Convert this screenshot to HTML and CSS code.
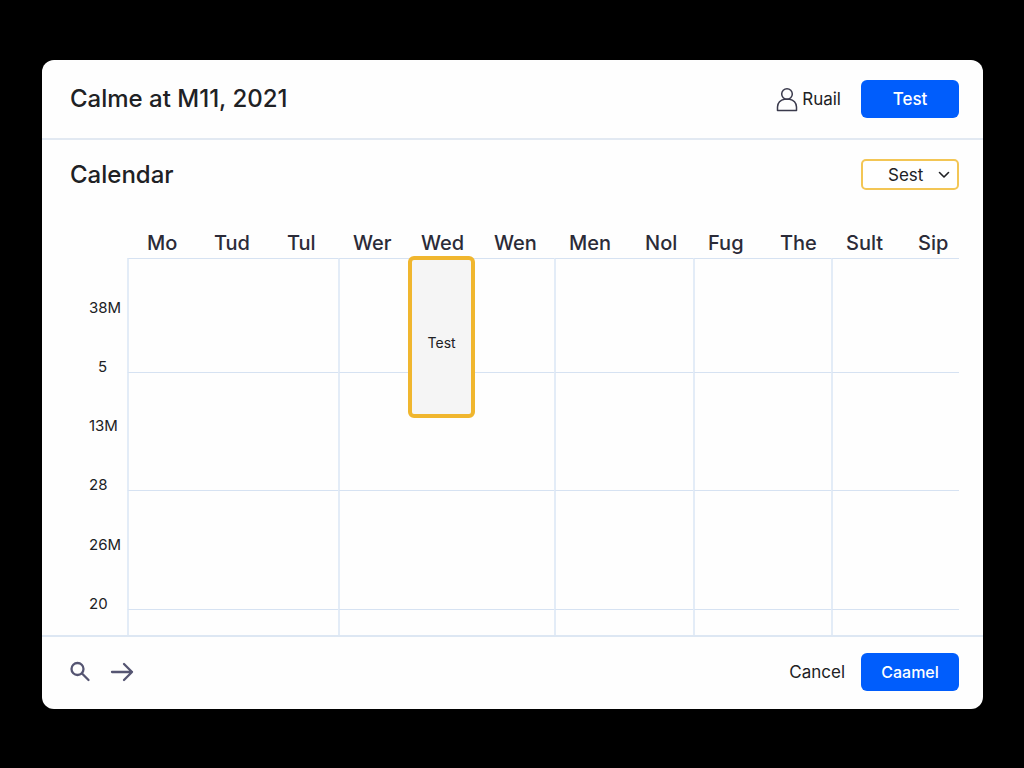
FILE: index.html
```html
<!DOCTYPE html>
<html lang="en">
<head>
<meta charset="utf-8">
<meta name="viewport" content="width=device-width, initial-scale=1">
<title>Calendar</title>
<link rel="stylesheet" href="styles.css">
</head>
<body>
<main class="card">
  <header class="bar header">
    <h1 class="title">Calme at M11, 2021</h1>
    <div class="actions">
      <a class="user" href="#">
        <svg class="user-icon" viewBox="0 0 22 26" aria-hidden="true"><circle cx="11" cy="8" r="5.3"/><path d="M1.500 24.500V21c0-4 3-7.300 7-7.800h5c4 .5 7 3.800 7 7.800v3.500z"/></svg>
        <span>Ruail</span>
      </a>
      <button class="button" type="button">Test</button>
    </div>
  </header>

  <section class="calendar">
    <div class="toolbar">
      <h2 class="title">Calendar</h2>
      <div class="picker">
        <select class="picker-select" aria-label="View"><option>Sest</option></select>
        <svg class="picker-arrow" viewBox="0 0 12 8" aria-hidden="true"><path d="M1.500 1.500 6 6l4.500-4.500"/></svg>
      </div>
    </div>

    <table class="schedule">
      <colgroup>
        <col class="col-time">
        <col class="col-wide"><col class="col-day"><col class="col-narrow">
        <col class="col-day"><col class="col-day"><col class="col-mid">
        <col class="col-widest"><col class="col-small">
        <col class="col-wide"><col class="col-narrow">
        <col class="col-wide"><col class="col-end">
      </colgroup>
      <thead>
        <tr>
          <td></td>
          <th class="first" scope="col">Mo</th><th scope="col">Tud</th><th scope="col">Tul</th>
          <th class="start" scope="col">Wer</th><th scope="col">Wed</th><th scope="col">Wen</th>
          <th class="start" scope="col">Men</th><th scope="col">Nol</th>
          <th class="start" scope="col">Fug</th><th scope="col">The</th>
          <th class="start" scope="col">Sult</th><th scope="col">Sip</th>
        </tr>
      </thead>
      <tbody>
        <tr class="line short"><th scope="row">38M</th><td colspan="3"></td><td class="slot" colspan="3"><button class="event" type="button">Test</button></td><td colspan="2"></td><td colspan="2"></td><td colspan="2"></td></tr>
        <tr><th class="single" scope="row">5</th><td colspan="3"></td><td colspan="3"></td><td colspan="2"></td><td colspan="2"></td><td colspan="2"></td></tr>
        <tr class="line"><th scope="row">13M</th><td colspan="3"></td><td colspan="3"></td><td colspan="2"></td><td colspan="2"></td><td colspan="2"></td></tr>
        <tr><th scope="row">28</th><td colspan="3"></td><td colspan="3"></td><td colspan="2"></td><td colspan="2"></td><td colspan="2"></td></tr>
        <tr class="line tall"><th scope="row">26M</th><td colspan="3"></td><td colspan="3"></td><td colspan="2"></td><td colspan="2"></td><td colspan="2"></td></tr>
        <tr><th scope="row">20</th><td colspan="3"></td><td colspan="3"></td><td colspan="2"></td><td colspan="2"></td><td colspan="2"></td></tr>
        <tr class="line last"><td class="blank"></td><td colspan="3"></td><td colspan="3"></td><td colspan="2"></td><td colspan="2"></td><td colspan="2"></td></tr>
      </tbody>
    </table>
  </section>

  <footer class="bar footer">
    <div class="tools">
      <button class="icon-button" type="button" aria-label="Search"><svg class="tool-icon" viewBox="0 0 24 24" aria-hidden="true"><circle cx="7.500" cy="9" r="6"/><path d="m12 13.500 6.500 6.500"/></svg></button>
      <button class="icon-button" type="button" aria-label="Next"><svg class="tool-icon" viewBox="0 0 24 24" aria-hidden="true"><path d="M2 12h20M14 4l8 8-8 8"/></svg></button>
    </div>
    <div class="actions">
      <button class="link-button" type="button">Cancel</button>
      <button class="button" type="button">Caamel</button>
    </div>
  </footer>
</main>
</body>
</html>
```

FILE: styles.css
```css
* {
  box-sizing: border-box;
}

body {
  margin: 0;
  min-height: 100vh;
  padding: 60px 41px 59px 42px;
  display: flex;
  background: #000;
  color: #202124;
  font-family: Inter, "Liberation Sans", sans-serif;
  font-size: 17px;
}

button,
select {
  font: inherit;
  color: inherit;
  cursor: pointer;
}

svg {
  display: block;
  fill: none;
  stroke: currentColor;
  stroke-linecap: round;
  stroke-linejoin: round;
}

.card {
  flex: 1;
  display: flex;
  flex-direction: column;
  background: #fefefe;
  border-radius: 12px;
}

.bar {
  display: flex;
  align-items: center;
  justify-content: space-between;
  padding: 0 24px 0 28px;
}

.header {
  height: 80px;
  border-bottom: 2px solid #e2e9f2;
}

.footer {
  height: 74px;
  padding-bottom: 2px;
  border-top: 2px solid #dde7f3;
}

.title {
  margin: 0;
  font-size: 24px;
  line-height: 30px;
  font-weight: 500;
}

.actions {
  display: flex;
  align-items: center;
  gap: 20px;
}

.footer .actions {
  gap: 16px;
}

.user {
  display: flex;
  align-items: center;
  gap: 4px;
  color: inherit;
  text-decoration: none;
}

.user-icon {
  width: 22px;
  height: 26px;
  stroke: #3a3a4c;
  stroke-width: 1.5;
}

.button {
  width: 98px;
  height: 38px;
  padding: 0;
  border: 0;
  border-radius: 6px;
  background: #005dfc;
  color: #fff;
  font-weight: 500;
}

.footer .button {
  font-size: 16px;
}

.link-button,
.icon-button {
  padding: 0;
  border: 0;
  background: none;
}

.calendar {
  flex: 1;
  padding: 19px 24px 0 28px;
}

.toolbar {
  display: flex;
  align-items: flex-end;
  justify-content: space-between;
  height: 31px;
  margin-bottom: 37px;
}

.picker {
  position: relative;
}

.picker-select {
  appearance: none;
  display: block;
  width: 98px;
  height: 31px;
  padding: 0 0 0 25px;
  border: 2px solid #f3c655;
  border-radius: 5px;
  background: #fff;
}

.picker-arrow {
  position: absolute;
  right: 9px;
  top: 12px;
  width: 12px;
  height: 8px;
  stroke-width: 1.6;
  pointer-events: none;
}

.schedule {
  width: 100%;
  table-layout: fixed;
  border-collapse: separate;
  border-spacing: 0;
}

.col-time { width: 57px; }
.col-widest { width: 81px; }
.col-wide { width: 77px; }
.col-day { width: 73px; }
.col-mid { width: 70px; }
.col-narrow { width: 61px; }
.col-small { width: 58px; }
.col-end { width: 51px; }

.schedule th,
.schedule td {
  padding: 0;
  font-weight: 400;
  text-align: left;
}

.schedule thead th {
  height: 31px;
  padding-left: 10px;
  font-size: 20px;
  line-height: 30px;
  font-weight: 500;
  color: #2b2b38;
}

.schedule thead .first {
  padding-left: 20px;
}

.schedule thead .start {
  padding-left: 15px;
}

.schedule tbody tr {
  height: 59px;
}

.schedule tbody .short {
  height: 55px;
}

.schedule tbody .tall {
  height: 60px;
}

.schedule tbody .last {
  height: 26px;
}

.schedule tbody th {
  padding-left: 19px;
  font-size: 15px;
  line-height: 10px;
  vertical-align: bottom;
}

.schedule tbody .single {
  padding-left: 28px;
}

.schedule tbody td {
  border-left: 2px solid #e3ecf7;
}

.schedule .line td {
  border-top: 1px solid #d6e2f2;
}

.schedule .line .blank {
  border: 0;
}

.schedule .slot {
  position: relative;
}

.event {
  position: absolute;
  top: -3px;
  left: 32%;
  width: 31%;
  height: 162px;
  padding: 10px 0 0;
  border: 4px solid #f0b62e;
  border-radius: 6px;
  background: #f5f5f5;
  font-size: 14px;
}

.tools {
  display: flex;
  gap: 16px;
}

.tool-icon {
  width: 24px;
  height: 24px;
  color: #555572;
  stroke-width: 2.3;
}
```
